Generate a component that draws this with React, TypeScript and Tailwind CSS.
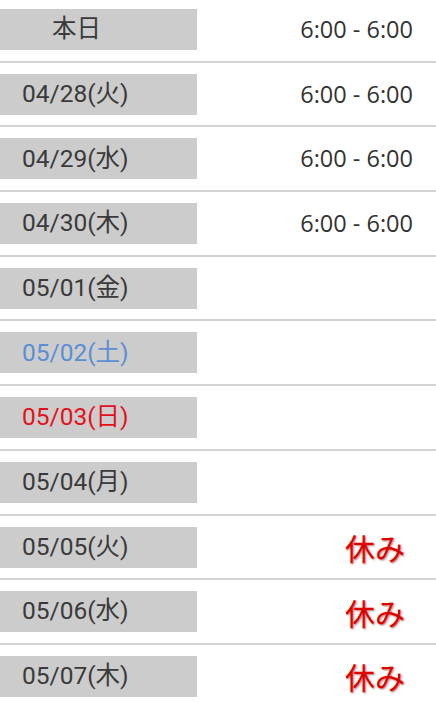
const rows: { label: string; tone: 'normal' | 'sat' | 'sun' | 'today'; right: string; off?: boolean }[] = [
  { label: '本日', tone: 'today', right: '6:00 - 6:00' },
  { label: '04/28(火)', tone: 'normal', right: '6:00 - 6:00' },
  { label: '04/29(水)', tone: 'normal', right: '6:00 - 6:00' },
  { label: '04/30(木)', tone: 'normal', right: '6:00 - 6:00' },
  { label: '05/01(金)', tone: 'normal', right: '' },
  { label: '05/02(土)', tone: 'sat', right: '' },
  { label: '05/03(日)', tone: 'sun', right: '' },
  { label: '05/04(月)', tone: 'normal', right: '' },
  { label: '05/05(火)', tone: 'normal', right: '休み', off: true },
  { label: '05/06(水)', tone: 'normal', right: '休み', off: true },
  { label: '05/07(木)', tone: 'normal', right: '休み', off: true },
]

const toneClass = {
  normal: 'pl-[22px] text-[#3a3a3a]',
  today: 'pl-[52px] text-[#3a3a3a]',
  sat: 'pl-[22px] text-[#5b8fd2]',
  sun: 'pl-[22px] text-[#e3111b]',
}

export default function App() {
  return (
    <div className="h-[703px] w-[436px] overflow-hidden bg-white font-['Roboto','Noto_Sans_CJK_JP',sans-serif]">
      <div className="-mt-[2px]">
        {rows.map((row) => (
          <div
            key={row.label}
            className="flex items-center justify-between border-b-2 border-[#d2d2d2] pt-[11px] pb-[10.7px]"
          >
            <div
              className={`flex h-[41px] w-[197px] items-center bg-[#cccccc] text-[24.5px] ${toneClass[row.tone]}`}
            >
              {row.label}
            </div>
            {row.off ? (
              <span className="pr-[31px] font-['Noto_Sans_CJK_JP',sans-serif] text-[30px] leading-none text-[#e00000] [text-shadow:1px_1px_2px_rgba(120,0,0,0.55)]">
                {row.right}
              </span>
            ) : (
              <span className="pr-[23px] font-['Open_Sans',sans-serif] text-[23.5px] text-[#333333]">
                {row.right}
              </span>
            )}
          </div>
        ))}
      </div>
    </div>
  )
}
